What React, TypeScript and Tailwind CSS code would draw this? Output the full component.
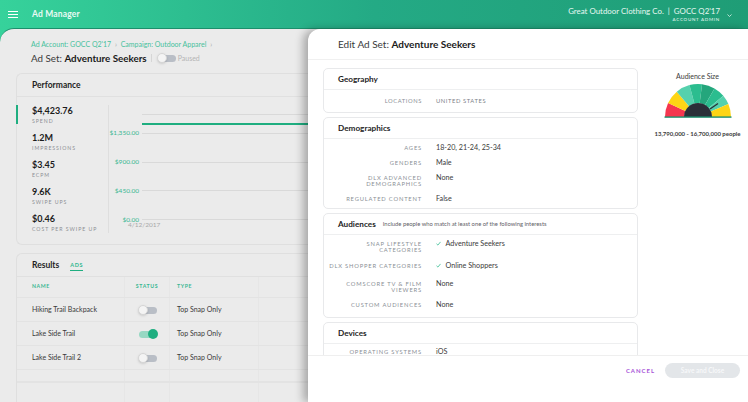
import React from "react";

const font = { fontFamily: "Lato, 'Noto Sans', sans-serif" };

function Toggle({ on = false }: { on?: boolean }) {
  return (
    <div className="relative h-[10px] w-[19px]">
      <div className={`absolute top-[2px] left-[1px] h-[7px] w-[18px] rounded-full ${on ? "bg-[#97d8c3]" : "bg-[#b9bec6]"}`} />
      <div
        className={`absolute top-0 h-[10px] w-[10px] rounded-full ${on ? "left-[10px] bg-[#1fae80]" : "left-0 border border-[#d6d6d6] bg-[#f4f4f4] shadow-sm"}`}
      />
    </div>
  );
}

function Metric({ value, label }: { value: string; label: string }) {
  return (
    <div className="h-[27px]">
      <div className="text-[9px] leading-[11px] font-bold text-[#1c1c1c]">{value}</div>
      <div className="mt-[0.5px] text-[5.2px] leading-[8px] tracking-[0.18em] text-[#8d8f94] uppercase whitespace-nowrap">{label}</div>
    </div>
  );
}

function ChartRow({ label }: { label: string }) {
  return (
    <div className="flex h-[28.7px] items-center">
      <div className="w-[30px] text-right text-[6.5px] text-[#38b792] whitespace-nowrap">{label}</div>
      <div className="ml-[3px] h-px flex-1 bg-[#d9d9d9]" />
    </div>
  );
}

function AdRow({ name, on }: { name: string; on?: boolean }) {
  return (
    <div className="flex h-[24px] border-b border-[#e3e3e3] text-[7px] text-[#3a3a3a]">
      <div className="flex w-[108px] items-center border-r border-[#e6e6e6] pl-[15px] pb-px whitespace-nowrap">{name}</div>
      <div className="flex w-[45px] items-center justify-center border-r border-[#e6e6e6]"><Toggle on={on} /></div>
      <div className="flex w-[89px] items-center border-r border-[#e6e6e6] pl-[7px] whitespace-nowrap">Top Snap Only</div>
      <div className="flex-1" />
    </div>
  );
}

function Field({ label, value, check, h }: { label: React.ReactNode; value: string; check?: boolean; h: string }) {
  return (
    <div className={`flex ${h}`}>
      <div className="w-[98px] pt-[1px] text-right text-[5.8px] leading-[6.2px] tracking-[0.14em] text-[#8b8f96] uppercase">{label}</div>
      <div className="ml-[14px] flex items-start text-[7.2px] leading-[7px] text-[#3b3b3b] whitespace-nowrap">
        {check && (
          <svg viewBox="0 0 10 10" className="mt-[1px] mr-[4.5px] h-[5px] w-[5px]" fill="none" stroke="#37bc92" strokeWidth="1.6">
            <path d="M1 5.5 L3.8 8.2 L9 1.8" />
          </svg>
        )}
        {value}
      </div>
    </div>
  );
}

function Card({ title, note, h, children }: { title: string; note?: string; h: string; children: React.ReactNode }) {
  return (
    <div className={`mb-[4px] shrink-0 rounded-[5px] border border-[#e8e9eb] bg-white ${h}`}>
      <div className="flex h-[21px] items-center border-b border-[#eeeff0] pl-[14px]">
        <span className="text-[8.2px] font-bold text-[#1e1e1e]">{title}</span>
        {note && <span className="ml-[7px] text-[5.85px] text-[#5f6268]">{note}</span>}
      </div>
      {children}
    </div>
  );
}

function Gauge() {
  const cx = 34;
  const cy = 34;
  const pt = (r: number, deg: number) => {
    const a = (deg * Math.PI) / 180;
    return `${cx - r * Math.cos(a)} ${cy - r * Math.sin(a)}`;
  };
  const colors = ["#f5364f", "#fdd515", "#55d1ad", "#2bbd8f", "#24a67c", "#2bbd8f", "#55d1ad", "#fdd515"];
  const stops = [0, 25, 50, 75, 97, 120, 140, 157, 180];
  return (
    <svg viewBox="0 0 68 36" className="h-[36px] w-[68px]">
      {colors.map((c, i) => (
        <path
          key={i}
          d={`M${pt(14, stops[i])} L${pt(33, stops[i])} A33 33 0 0 1 ${pt(33, stops[i + 1])} L${pt(14, stops[i + 1])} Z`}
          fill={c}
        />
      ))}
      <path d="M20 34 A14 14 0 0 1 48 34 Z" fill="#2a2f38" />
      <path d="M46 26 L54 20.5" stroke="#2a2f38" strokeWidth="1.3" />
      <rect x="0.5" y="33.4" width="67" height="1.4" fill="#1f8f6e" />
    </svg>
  );
}

export default function App() {
  return (
    <div style={font} className="relative h-[402px] w-[748px] overflow-hidden bg-gradient-to-r from-[#36d29b] via-[#24aa85] to-[#1f9d76]">
      <header className="flex h-[28px] items-center text-white">
        <div className="ml-[8px] flex w-[10px] flex-col gap-[2px]">
          <span className="h-px w-full bg-white" /><span className="h-px w-full bg-white" /><span className="h-px w-full bg-white" />
        </div>
        <span className="ml-[14px] text-[8.5px] font-bold tracking-[0.02em] text-[#e9faf4]">Ad Manager</span>
        <div className="ml-auto mr-[16px] flex items-center">
          <div className="text-right">
            <div className="text-[7.9px] leading-[10px] text-[#e8f8f2] whitespace-nowrap">Great Outdoor Clothing Co. &nbsp;|&nbsp; GOCC Q2'17</div>
            <div className="text-[4.5px] leading-[7px] tracking-[0.16em] text-[#e8f8f2]">ACCOUNT ADMIN</div>
          </div>
          <svg viewBox="0 0 10 6" className="ml-[7px] mt-[3px] h-[3px] w-[5px]" fill="none" stroke="#e8f8f2" strokeWidth="1.5"><path d="M1 1 L5 5 L9 1" /></svg>
        </div>
      </header>

      <main className="h-[374px] overflow-hidden rounded-tl-[14px] border-t border-[#1c8f6c] bg-[#ebebeb] pl-[16px] pt-[11px]">
        <div className="pl-[15px] text-[7px] leading-[8px] text-[#47c19d] whitespace-nowrap">
          Ad Account: GOCC Q2'17 <span className="mx-[2px] text-[#a9a9a9]">›</span> Campaign: Outdoor Apparel <span className="ml-[2px] text-[#a9a9a9]">›</span>
        </div>
        <div className="mt-[3px] flex h-[14px] items-center pl-[15px] whitespace-nowrap">
          <span className="text-[9.8px] text-[#3a3a3a]">Ad Set: <b className="font-bold text-[#1b1b1b]">Adventure Seekers</b></span>
          <span className="ml-[4px] mr-[5px] h-[8px] w-px bg-[#d6d6d6]" />
          <Toggle />
          <span className="ml-[2px] text-[7px] text-[#b5b5b5]">Paused</span>
        </div>

        <section className="mt-[8px] h-[172px] w-[320px] rounded-l-[6px] border border-r-0 border-[#dfdfdf]">
          <div className="flex h-[23px] items-center border-b border-[#e0e0e0] pl-[15px] text-[8.5px] font-bold text-[#1e1e1e]">Performance</div>
          <div className="relative flex">
            <div className="absolute top-[8px] left-[-1px] h-[19px] w-[2px] bg-[#1fae80]" />
            <div className="mt-[8px] h-[128px] w-[92px] border-r border-[#dedede] pl-[15px]">
              <Metric value="$4,423.76" label="Spend" />
              <Metric value="1.2M" label="Impressions" />
              <Metric value="$3.45" label="eCPM" />
              <Metric value="9.6K" label="Swipe Ups" />
              <Metric value="$0.46" label="Cost per Swipe Up" />
            </div>
            <div className="relative flex-1 pt-[22px]">
              <div className="absolute top-[17px] left-[33px] right-0 h-px bg-[#d9d9d9]" />
              <div className="absolute top-[26px] left-[33px] right-0 h-[2px] bg-[#1fae80]" />
              <ChartRow label="$1,350.00" />
              <ChartRow label="$900.00" />
              <ChartRow label="$450.00" />
              <ChartRow label="$0.00" />
              <div className="absolute top-[124px] left-[19px] text-[6.5px] leading-[8px] text-[#a8a8a8]">4/12/2017</div>
            </div>
          </div>
        </section>

        <section className="mt-[8px] h-[160px] w-[320px] rounded-tl-[6px] border border-r-0 border-b-0 border-[#dfdfdf]">
          <div className="flex h-[23px] items-center border-b border-[#e0e0e0] pl-[15px]">
            <span className="text-[8.5px] font-bold text-[#1e1e1e]">Results</span>
            <span className="ml-[11px] mt-[2px] border-b border-[#1fae80] pb-[1px] text-[5.5px] leading-[7px] font-bold tracking-[0.12em] text-[#2eb88f]">ADS</span>
          </div>
          <div className="flex h-[21px] border-b border-[#e3e3e3] text-[5.2px] font-bold tracking-[0.12em] text-[#38b792]">
            <div className="flex w-[108px] items-center border-r border-[#e6e6e6] pl-[15px]">NAME</div>
            <div className="flex w-[45px] items-center justify-center border-r border-[#e6e6e6]">STATUS</div>
            <div className="flex w-[89px] items-center border-r border-[#e6e6e6] pl-[7px]">TYPE</div>
          </div>
          <AdRow name="Hiking Trail Backpack" />
          <AdRow name="Lake Side Trail" on />
          <AdRow name="Lake Side Trail 2" />
          <div className="flex h-[13px] border-b-2 border-[#e3e3e3]">
            <div className="w-[108px] border-r border-[#e6e6e6]" />
            <div className="w-[45px] border-r border-[#e6e6e6]" />
            <div className="w-[89px] border-r border-[#e6e6e6]" />
          </div>
          <div className="flex h-[30px]">
            <div className="w-[108px] border-r border-[#e6e6e6]" />
            <div className="w-[45px] border-r border-[#e6e6e6]" />
            <div className="w-[89px] border-r border-[#e6e6e6]" />
          </div>
        </section>
      </main>

      <aside className="absolute top-[29px] right-0 bottom-0 flex w-[440px] flex-col rounded-tl-[12px] bg-white shadow-[-5px_0_8px_rgba(0,0,0,0.28)]">
        <div className="flex h-[31px] shrink-0 items-center border-b border-[#f0f0f0] pl-[30px] text-[10px] text-[#3a3a3a]">
          Edit Ad Set:&nbsp;<b className="font-bold text-[#1b1b1b]">Adventure Seekers</b>
        </div>
        <div className="flex min-h-0 flex-1">
          <div className="flex w-[345px] flex-col overflow-hidden pl-[15px] pt-[8px] pr-[15px]">
            <Card title="Geography" h="h-[45px]">
              <div className="flex pt-[7px]">
                <div className="w-[98px] text-right text-[5.8px] leading-[8px] tracking-[0.1em] text-[#8b8f96]">LOCATIONS</div>
                <div className="ml-[14px] text-[5.8px] leading-[8px] tracking-[0.1em] text-[#7c8087]">UNITED STATES</div>
              </div>
            </Card>
            <Card title="Demographics" h="h-[92px]">
              <div className="pt-[5px]">
                <Field label="Ages" value="18-20, 21-24, 25-34" h="h-[15px]" />
                <Field label="Genders" value="Male" h="h-[15px]" />
                <Field label={<>DLX Advanced<br />Demographics</>} value="None" h="h-[21px]" />
                <Field label="Regulated Content" value="False" h="h-[10px]" />
              </div>
            </Card>
            <Card title="Audiences" note="Include people who match at least one of the following interests" h="h-[105px]">
              <div className="pt-[5px]">
                <Field label={<>Snap Lifestyle<br />Categories</>} value="Adventure Seekers" check h="h-[22px]" />
                <Field label="DLX Shopper Categories" value="Online Shoppers" check h="h-[18px]" />
                <Field label={<>comScore TV &amp; Film<br />Viewers</>} value="None" h="h-[21px]" />
                <Field label="Custom Audiences" value="None" h="h-[10px]" />
              </div>
            </Card>
            <Card title="Devices" h="h-[60px]">
              <div className="pt-[4px]">
                <Field label="Operating Systems" value="iOS" h="h-[8px]" />
              </div>
            </Card>
          </div>
          <div className="flex flex-1 flex-col items-center pt-[12px] pr-[6px]">
            <div className="mb-[3px] text-[7px] leading-[8px] text-[#3b3b3b]">Audience Size</div>
            <Gauge />
            <div className="mt-[11px] text-[6px] leading-[8px] font-bold text-[#3b3b3b] whitespace-nowrap">13,790,000 - 16,700,000 people</div>
          </div>
        </div>
        <div className="flex h-[47px] shrink-0 items-start justify-end border-t border-[#efefef] bg-white pt-[7px] pr-[8px]">
          <span className="mt-[4px] mr-[10px] text-[6px] leading-[8px] font-bold tracking-[0.16em] text-[#a855d8]">CANCEL</span>
          <div className="flex h-[15px] w-[75px] items-center justify-center rounded-full bg-[#e3e6e9] text-[6.5px] font-bold text-[#f7f8f9]">Save and Close</div>
        </div>
      </aside>
    </div>
  );
}
